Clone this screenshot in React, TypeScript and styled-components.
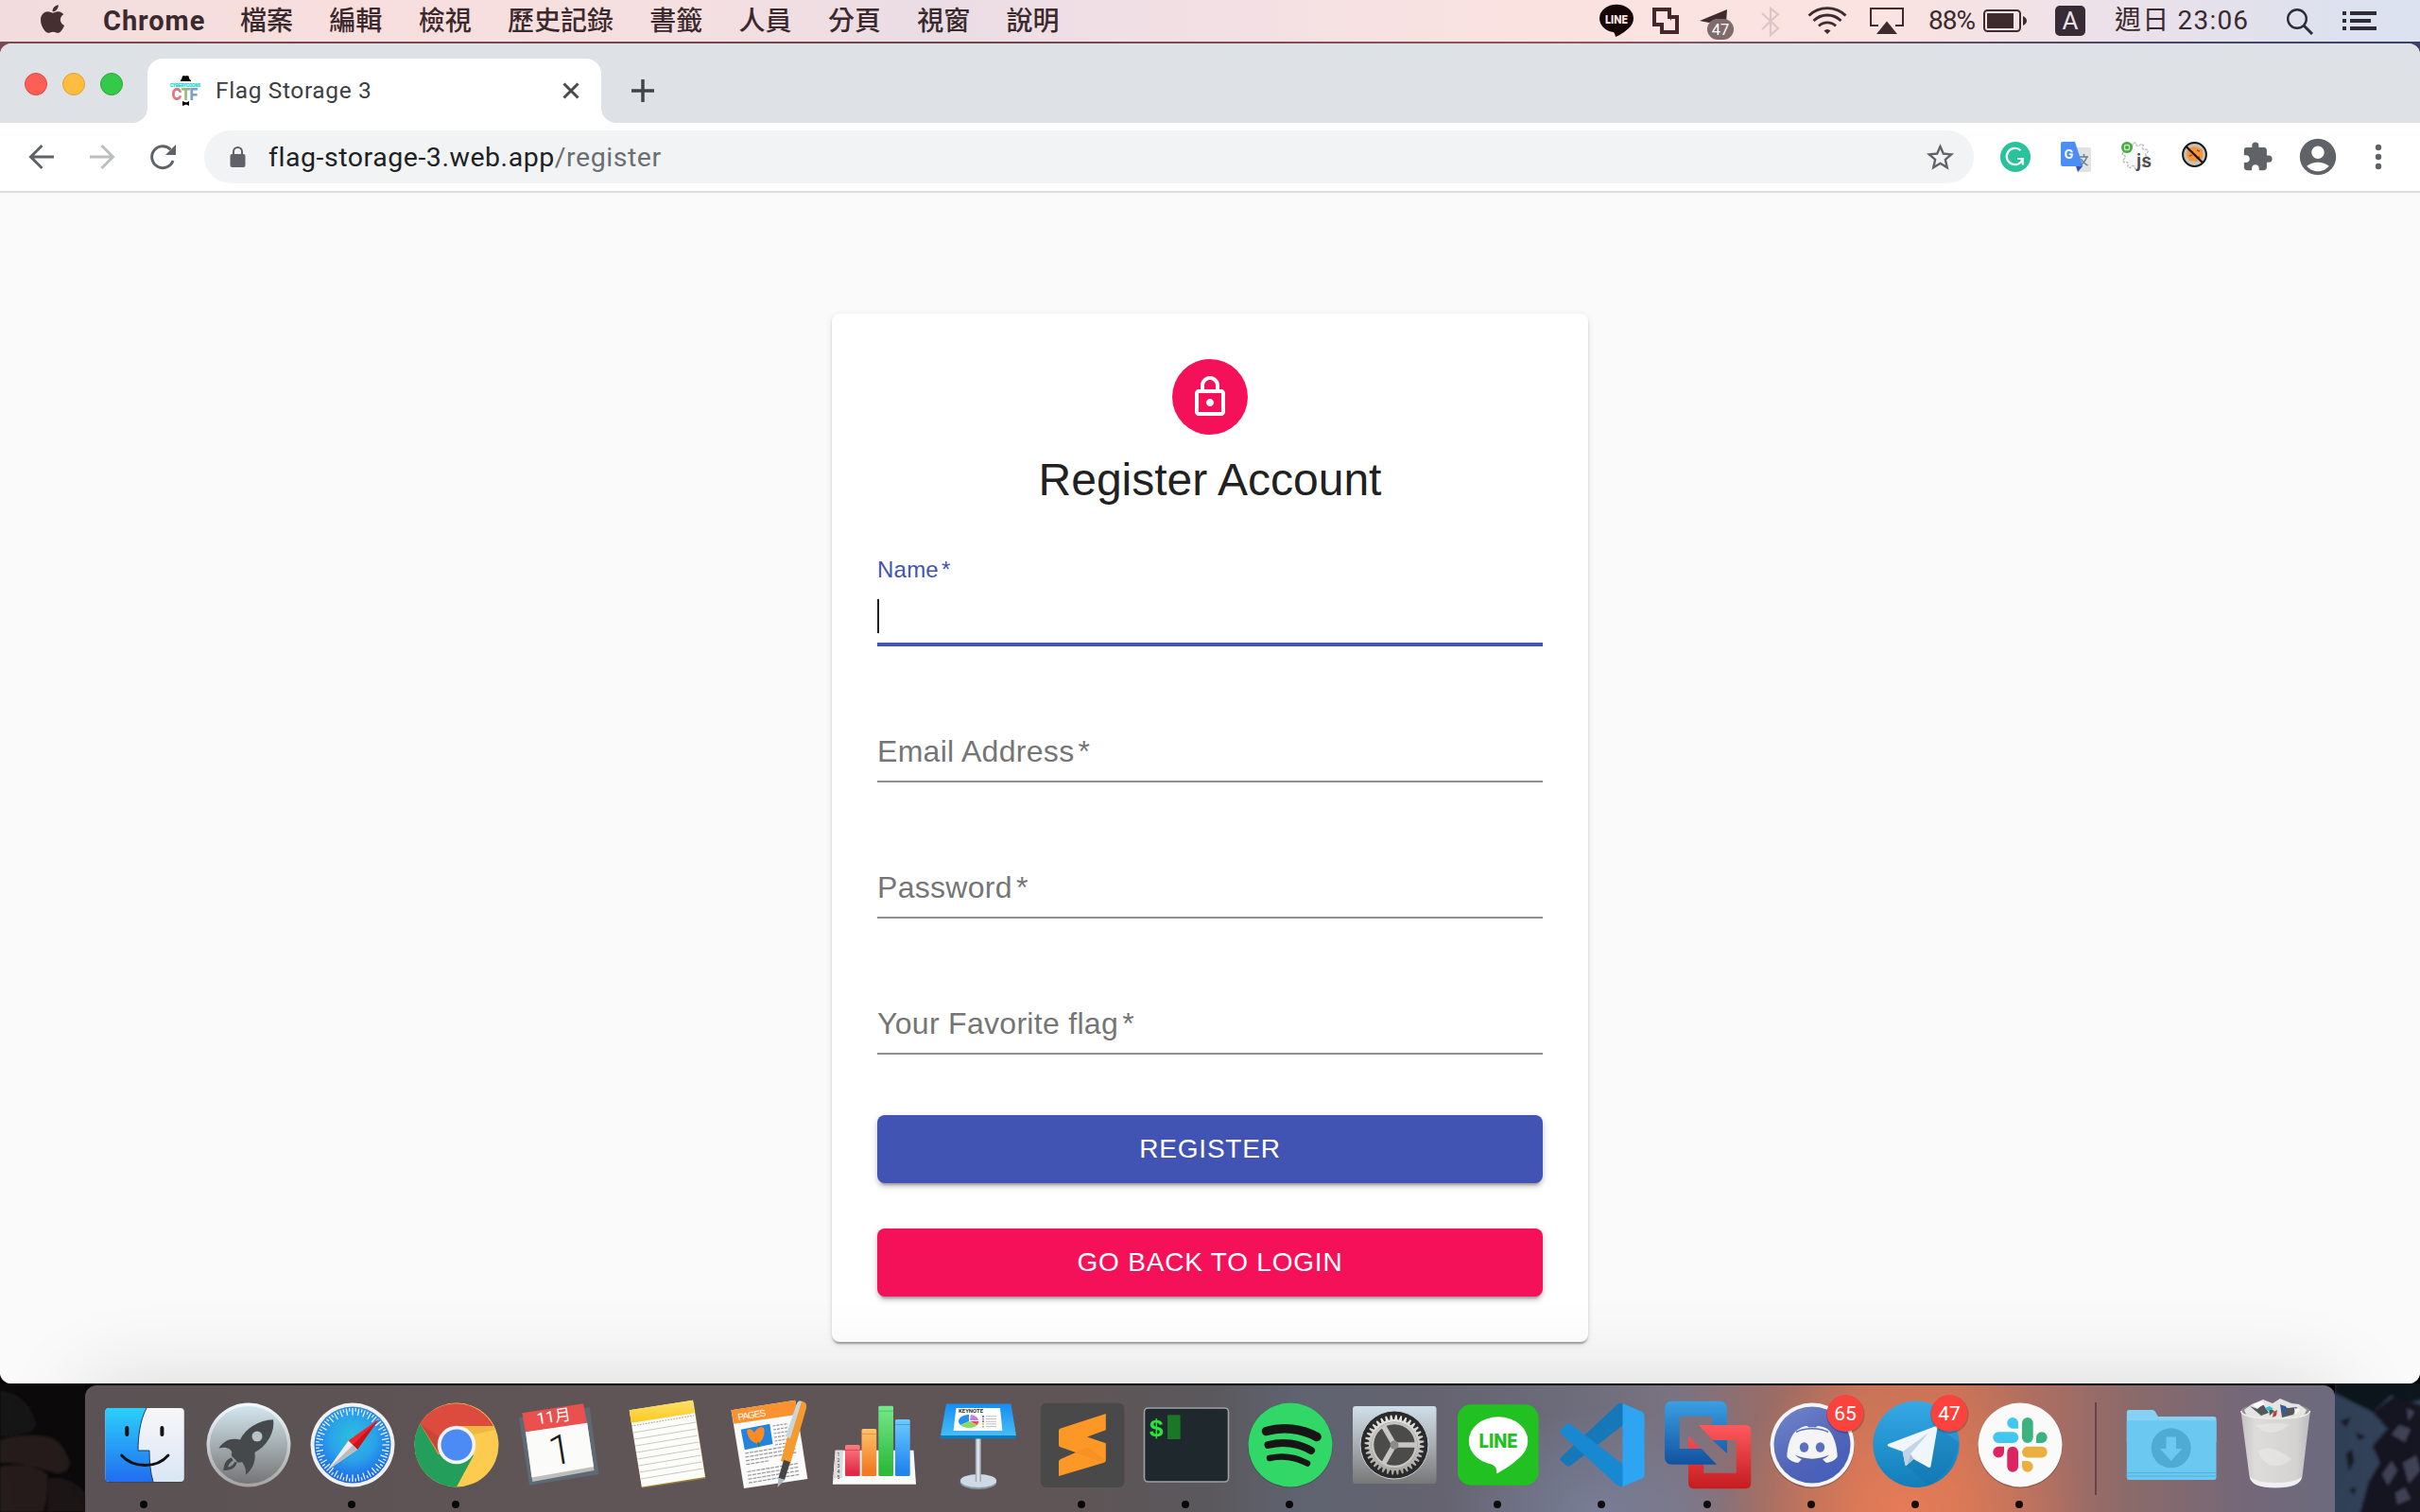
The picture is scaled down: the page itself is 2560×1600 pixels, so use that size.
import React from 'react';
import styled, { createGlobalStyle } from 'styled-components';
import { FaApple } from 'react-icons/fa';
import { MdOutlineLock, MdAccountCircle, MdExtension, MdStarBorder } from 'react-icons/md';

const ui = `Roboto, "Noto Sans CJK TC", sans-serif`;
const page = `"Liberation Sans", Arial, sans-serif`;

const Global = createGlobalStyle`
  * { box-sizing: border-box; }
  html, body { margin: 0; padding: 0; background: #0b0909; }
  body { overflow: hidden; }
  svg { display: block; flex: none; overflow: visible; }
`;

const Desktop = styled.div`
  width: 2560px;
  height: 1600px;
  display: flex;
  flex-direction: column;
  overflow: hidden;
  background: linear-gradient(90deg, #7a4c50 0, #6d474b 40%, #8a5a5c 65%, #454668 90%, #3b4165 100%) 0 0 / 100% 80px no-repeat, #060506;
  font-family: ${ui};
`;

/* ---------- menu bar ---------- */

const MenuBar = styled.header`
  height: 44px;
  display: flex;
  align-items: center;
  justify-content: space-between;
  padding: 0 46px 0 40px;
  color: #3b2a2d;
  background: linear-gradient(90deg, #f2dcdd 0, #f8dfde 14%, #f6dfe0 27%, #ebdde5 38%, #f0dfe5 46%, #fae2e1 62%, #fae3e1 78%, #ece1e9 87%, #dde1ee 96%, #dde2f0 100%);
`;

const MenuLeft = styled.nav`
  display: flex;
  align-items: center;
  height: 44px;
`;

const AppleMark = styled(FaApple)`
  width: 31px;
  height: 34px;
  margin-top: -5px;
  color: #452f31;
`;

const AppName = styled.span`
  margin-left: 38px;
  width: 145px;
  font-size: 29px;
  font-weight: 700;
  letter-spacing: 0.95px;
  white-space: nowrap;
`;

const MenuItem = styled.span`
  font-size: 28px;
  font-weight: 500;
  line-height: 44px;
  margin-right: 38.3px;
  margin-top: 1px;
  white-space: nowrap;
`;

const MenuRight = styled.div`
  display: flex;
  align-items: center;
  height: 44px;
`;

const Status = styled.div<{ $w: number }>`
  width: ${(p) => p.$w}px;
  height: 44px;
  flex: none;
`;

const StatusText = styled.span<{ $w: number; $ls?: number }>`
  width: ${(p) => p.$w}px;
  flex: none;
  font-size: 28px;
  line-height: 44px;
  letter-spacing: ${(p) => p.$ls ?? 0}px;
  white-space: nowrap;
`;

const InputSource = styled.div`
  width: 32px;
  height: 32px;
  margin-right: 31px;
  border-radius: 5px;
  background: #372b35;
  color: #ece2ea;
  font-size: 26px;
  line-height: 33px;
  text-align: center;
`;

/* ---------- browser window ---------- */

const Window = styled.main`
  margin-top: 2px;
  height: 1418px;
  flex: none;
  display: flex;
  flex-direction: column;
  border-radius: 12px;
  overflow: hidden;
  background: #fafafa;
`;

const TabStrip = styled.div`
  height: 84px;
  flex: none;
  display: flex;
  align-items: flex-end;
  background: #dee1e6;
`;

const Lights = styled.div`
  display: flex;
  gap: 16px;
  padding: 0 26px 29px;
  width: 156px;
`;

const Light = styled.span<{ $c: string; $b: string }>`
  width: 24px;
  height: 24px;
  flex: none;
  border-radius: 50%;
  background: ${(p) => p.$c};
  border: 1px solid ${(p) => p.$b};
`;

const Tab = styled.div`
  position: relative;
  width: 480px;
  height: 68px;
  padding: 0 20px 0 24px;
  display: flex;
  align-items: center;
  background: #fff;
  border-radius: 16px 16px 0 0;
  &::before,
  &::after {
    content: '';
    position: absolute;
    bottom: 0;
    width: 16px;
    height: 16px;
  }
  &::before {
    left: -16px;
    background: radial-gradient(circle at 0 0, #dee1e6 15.5px, #fff 16.5px);
  }
  &::after {
    right: -16px;
    background: radial-gradient(circle at 100% 0, #dee1e6 15.5px, #fff 16.5px);
  }
`;

const TabTitle = styled.span`
  flex: 1;
  margin-left: 16px;
  font-size: 24.5px;
  line-height: 32px;
  letter-spacing: 0.62px;
  color: #3c4043;
`;

const NewTab = styled.div`
  margin: 0 0 22px 32px;
`;

const Toolbar = styled.div`
  height: 74px;
  flex: none;
  display: flex;
  align-items: center;
  background: #fff;
  border-bottom: 2px solid #dadce0;
`;

const NavButtons = styled.div`
  display: flex;
  width: 216px;
  padding-left: 24px;
  gap: 24px;
`;

const Omnibox = styled.div`
  width: 1872px;
  height: 56px;
  border-radius: 28px;
  background: #f1f3f4;
  display: flex;
  align-items: center;
  padding: 0 18px 0 27px;
`;

const Url = styled.span`
  flex: 1;
  margin-left: 24px;
  padding-top: 1px;
  font-size: 28.5px;
  line-height: 55px;
  letter-spacing: 0.54px;
  color: #202124;
`;

const UrlPath = styled.span`
  color: #6b6e72;
`;

const Extensions = styled.div`
  display: flex;
  align-items: center;
  padding-left: 28px;
  color: #5f6368;
`;

const Slot = styled.div<{ $w: number }>`
  width: ${(p) => p.$w}px;
  height: 38px;
  display: flex;
  align-items: center;
`;

/* ---------- page ---------- */

const Page = styled.div`
  flex: 1;
  padding-top: 128px;
  display: flex;
  justify-content: center;
  align-items: flex-start;
  font-family: ${page};
  background: #fafafa;
`;

const Card = styled.form`
  width: 800px;
  height: 1088px;
  padding: 48px;
  display: flex;
  flex-direction: column;
  align-items: center;
  background: #fff;
  border-radius: 8px;
  box-shadow: 0 4px 2px -2px rgba(0, 0, 0, 0.2), 0 2px 2px 0 rgba(0, 0, 0, 0.14), 0 2px 6px 0 rgba(0, 0, 0, 0.12);
`;

const Avatar = styled.div`
  width: 80px;
  height: 80px;
  flex: none;
  border-radius: 50%;
  display: flex;
  align-items: center;
  justify-content: center;
  background: #f4115a;
  color: #fff;
`;

const Title = styled.h1`
  margin: 16px 0 48px;
  font-size: 48px;
  font-weight: 400;
  line-height: 64px;
  color: #212121;
`;

const Field = styled.div<{ $focused?: boolean }>`
  width: 704px;
  height: 96px;
  flex: none;
  margin-bottom: 48px;
  padding-top: ${(p) => (p.$focused ? 3 : 47)}px;
  border-bottom: ${(p) => (p.$focused ? '4px solid #4154b3' : '2px solid #8f8f8f')};
`;

const Label = styled.label<{ $focused?: boolean }>`
  display: block;
  font-size: ${(p) => (p.$focused ? 24 : 32)}px;
  line-height: 1;
  letter-spacing: 0.00938em;
  color: ${(p) => (p.$focused ? '#4154b3' : '#757575')};
`;

const Asterisk = styled.span`
  margin-left: -0.08em;
`;

const Caret = styled.span`
  display: block;
  width: 2px;
  height: 36px;
  margin-top: 19px;
  background: #212121;
`;

const Button = styled.button<{ $bg: string }>`
  width: 704px;
  height: 72px;
  flex: none;
  margin: 0 0 48px;
  padding: 0;
  border: 0;
  border-radius: 8px;
  background: ${(p) => p.$bg};
  color: #fff;
  font-family: ${page};
  font-size: 28px;
  letter-spacing: 0.02857em;
  box-shadow: 0 6px 2px -4px rgba(0, 0, 0, 0.2), 0 4px 4px 0 rgba(0, 0, 0, 0.14), 0 2px 10px 0 rgba(0, 0, 0, 0.12);
`;

const ButtonGroup = styled.div`
  padding-top: 16px;
`;

/* ---------- dock ---------- */

const Bottom = styled.footer`
  position: relative;
  height: 136px;
  flex: none;
  display: flex;
  padding-top: 2px;
`;

const Rocks = styled.svg`
  margin-top: -2px;
`;

const Dock = styled.div`
  position: relative;
  width: 2380px;
  height: 134px;
  padding-left: 7px;
  display: flex;
  border-radius: 12px 12px 0 0;
  background: radial-gradient(ellipse 190px 170px at 1925px 134px, rgba(238, 126, 86, 0.8), rgba(240, 126, 84, 0) 100%),
    radial-gradient(ellipse 160px 110px at 1600px 134px, rgba(125, 135, 165, 0.6), rgba(125, 135, 165, 0) 100%),
    linear-gradient(90deg, #5a5254 0, #5f5456 20%, #5f5557 44%, #5a585c 50%, #5f6370 54%, #64636f 60%, #6c6c7b 66%, #7b7381 71%, #9a6c66 75%, #c07158 79%, #c57257 83%, #ab6e62 87%, #8a6a6b 91%, #746878 96%, #6c6a7e 100%);
  box-shadow: 0 0 90px rgba(0, 0, 0, 0.15);
`;

const Separator = styled.div`
  width: 2px;
  height: 98px;
  margin: 18px 24px 0 29px;
  background: rgba(70, 35, 40, 0.55);
`;

const AppIcon = ({ dot, children }: { dot?: number; children: React.ReactNode }) => (
  <svg width="110" height="134" viewBox="0 0 110 134">
    {children}
    {dot && <circle cx={dot} cy="126" r="4" fill="#000" fillOpacity="0.9" />}
  </svg>
);

const Badge = ({ n }: { n: number }) => (
  <g>
    <circle cx="95.3" cy="30.7" r="20.2" fill="#000" opacity="0.2" />
    <circle cx="95" cy="29.7" r="19.4" fill="#fb423d" />
    <text x="95" y="37" fontFamily="Roboto" fontSize="21" textAnchor="middle" fill="#fff">{n}</text>
  </g>
);

const polar = (cx: number, cy: number, r: number, deg: number) => {
  const a = (deg * Math.PI) / 180;
  return [cx + r * Math.cos(a), cy + r * Math.sin(a)];
};

const gearPath = (cx: number, cy: number, inner: number, outer: number, teeth: number) => {
  const step = 360 / teeth;
  let d = '';
  for (let i = 0; i < teeth; i++) {
    [[inner, 0], [outer, 0.2], [outer, 0.5], [inner, 0.7]].forEach(([r, f]) => {
      const [x, y] = polar(cx, cy, r, (i + f) * step);
      d += `${d ? 'L' : 'M'}${x.toFixed(2)} ${y.toFixed(2)}`;
    });
  }
  return d + 'Z';
};

const Finder = () => (
  <AppIcon dot={55}>
    <defs>
      <linearGradient id="fb" x1="0" y1="0" x2="0" y2="1"><stop stopColor="#2bd0fb" /><stop offset="1" stopColor="#216df0" /></linearGradient>
      <linearGradient id="fw" x1="0" y1="0" x2="0" y2="1"><stop stopColor="#f7f6f8" /><stop offset="1" stopColor="#dae6f5" /></linearGradient>
    </defs>
    <rect x="14.4" y="25" width="83.4" height="78" rx="4" fill="#333" opacity="0.4" />
    <rect x="14.4" y="24" width="83.4" height="78" rx="4" fill="url(#fw)" />
    <path d="M18.4 24H58C51 37 49 55 49 69H61C61 80 62 92 65 102H18.4a4 4 0 0 1-4-4V28a4 4 0 0 1 4-4Z" fill="url(#fb)" />
    <path d="M58 24C51 37 49 55 49 69H61C61 80 62 92 65 102" fill="none" stroke="#1b3c66" strokeWidth="1" />
    <path d="M37.3 45v7M74.4 45v7" stroke="#111" strokeWidth="4" strokeLinecap="round" />
    <path d="M31.6 74C44 88 69 88 81 74" fill="none" stroke="#111" strokeWidth="2.8" strokeLinecap="round" />
  </AppIcon>
);

const Launchpad = () => (
  <AppIcon>
    <defs>
      <linearGradient id="lp" x1="0" y1="0" x2="0" y2="1"><stop stopColor="#d3e6ee" /><stop offset="1" stopColor="#757575" /></linearGradient>
      <linearGradient id="lr" x1="0" y1="0" x2="0" y2="1"><stop stopColor="#f1fbff" /><stop offset="1" stopColor="#a3a3a3" /></linearGradient>
    </defs>
    <circle cx="56" cy="63" r="44.5" fill="url(#lr)" />
    <circle cx="56" cy="63" r="41" fill="url(#lp)" />
    <path d="M82 36.3C84 48 77 63 62.4 71C64 80 60 89 53 94.7C53.5 89 52 85 49 81C46 82 44 82 43 80C42 77 37 76 38 73C39 70 37 68 35 67C31 65 28 65.5 24.4 66.7C29 59 37 55 47 57.5C53 45 67 37 82 36.3Z" fill="#45494b" />
    <circle cx="65" cy="54" r="5.5" fill="#b9c3c7" />
    <path d="M38 76.5C31 79 30 84 29.3 90C36 90 43 88 43.5 81L41 81.5C39 85 37 86 34 86.5C35 83 37 81 39.5 79.5Z" fill="#45494b" />
  </AppIcon>
);

const Safari = () => (
  <AppIcon dot={55}>
    <defs><radialGradient id="sf" cx="0.5" cy="0.4" r="0.6"><stop stopColor="#2cc0dc" /><stop offset="0.5" stopColor="#2aa2ea" /><stop offset="1" stopColor="#1c62e4" /></radialGradient></defs>
    <circle cx="56" cy="63" r="44.5" fill="#f2f1f2" />
    <circle cx="56" cy="63" r="40.5" fill="url(#sf)" />
    {Array.from({ length: 72 }, (_, i) => {
      const [x1, y1] = polar(56, 63, 39, i * 5);
      const [x2, y2] = polar(56, 63, i % 2 ? 35.5 : 31.5, i * 5);
      return <line key={i} x1={x1} y1={y1} x2={x2} y2={y2} stroke="#eaf6ff" strokeWidth="1.3" />;
    })}
    <path d="M84 35.5L51.5 58.5L61 68Z" fill="#f0242b" />
    <path d="M84 35.5L56.2 63.3L61 68Z" fill="#c8141d" />
    <path d="M29 90L51.5 58.5L61 68Z" fill="#ededed" />
    <path d="M29 90L56.2 63.3L61 68Z" fill="#b9bcc0" />
  </AppIcon>
);

const ChromeIcon = () => (
  <AppIcon dot={55}>
    <circle cx="56" cy="63" r="44.5" fill="#fdcb4d" />
    <path d="M56 63L36.7 73.3L17.5 40.7A44.5 44.5 0 0 0 56 107.5L74 74Z" fill="#249f5b" />
    <path d="M17.5 40.7A44.5 44.5 0 0 1 95 43H56L37.5 72Z" fill="#dc4b3e" />
    <path d="M56 43H95L96.5 47L74 52Z" fill="#e0a63a" opacity="0.5" />
    <path d="M17.5 40.7L37 74L43 58Z" fill="#a8382f" opacity="0.35" />
    <circle cx="56" cy="63" r="20.2" fill="#f3f3f3" />
    <circle cx="56" cy="63" r="16.5" fill="#4c8bf5" />
  </AppIcon>
);

const CalendarIcon = () => (
  <AppIcon>
    <path d="M12 34L86.7 23L96.5 94L23 105.7Z" fill="#5d6973" />
    <path d="M19 49L84 39L91.6 90L26.3 102Z" fill="#bdbdb9" />
    <path d="M19 49L84 39L91 86L25.5 97.5Z" fill="#fbfbfa" />
    <path d="M15.2 29.3L80 19.3L84 39.7L19 49.3Z" fill="#e9504e" />
    <g transform="rotate(-9 50 60)">
      <text x="53" y="39" fontFamily="Roboto, 'Noto Sans CJK TC'" fontSize="17" fill="#fff" textAnchor="middle">11月</text>
      <text x="54" y="84" fontFamily="Roboto" fontWeight="300" fontSize="44" fill="#1c1c1c" textAnchor="middle">1</text>
    </g>
  </AppIcon>
);

const Notes = () => (
  <AppIcon>
    <defs><linearGradient id="ny" x1="0" y1="0" x2="0" y2="1"><stop stopColor="#ffe06a" /><stop offset="1" stopColor="#fac91f" /></linearGradient></defs>
    <path d="M20 30L87 18L99.5 98.5L32 108.7Z" fill="#9a8332" />
    <path d="M18.7 26.3L86 15.7L99 97L31.8 107.5Z" fill="#fcfcf9" />
    {[0, 1, 2, 3, 4, 5, 6, 7].map((i) => (
      <path key={i} d={`M${23 + i * 1.1} ${50 + i * 7}l66 -11`} stroke="#c8c8c4" strokeWidth="1" />
    ))}
    <path d="M21 43l66-11" stroke="#999" strokeDasharray="1.5 1.5" />
    <path d="M18.7 26.3L86 15.7L87.7 29.3L20.8 39.7Z" fill="url(#ny)" />
  </AppIcon>
);

const Pages = () => (
  <AppIcon>
    <path d="M16.5 26.3L84.2 15.7L97.3 99L30 109Z" fill="#fbfbfb" />
    <path d="M16.5 26.3L84.2 15.7L87 30.7L19.3 40.7Z" fill="#fb9230" />
    <text transform="rotate(-9 24 37)" x="24" y="37" fontFamily="Liberation Sans" fontSize="10" fill="#fff" textLength="30">PAGES</text>
    <path d="M26.7 46.7L57.3 40.7L60.5 62L30.8 68.3Z" fill="#2483dd" />
    <path d="M33 48C36 45 38 46 41 50C43 46 47 43 51 45C53 51 50 59 45 61.5C38 61 34 55 33 48Z" fill="#fb8b22" />
    <path d="M45 60l1 5" stroke="#3d7b2f" strokeWidth="1.5" />
    {[0, 1, 2, 3, 4, 5].map((i) => <path key={i} d={`M${60.5 + i * 0.5} ${43 + i * 4}l16-2.6`} stroke="#999" strokeWidth="1.2" strokeDasharray="3 1" />)}
    {[0, 1, 2, 3, 5, 6, 7, 8].map((i) => <path key={i} d={`M${31 + i * 0.5} ${72 + i * 3.9}l${i === 3 ? 24 : 54}-${i === 3 ? 4 : 9}`} stroke="#999" strokeWidth="1.2" strokeDasharray="4 1" />)}
    <path d="M85 22Q87 15 92 17Q97 18 96 24L79 83L69 80Z" fill="#f59a2c" />
    <path d="M85 22Q87 15 91 17L79 56L74 54Z" fill="#c8d6e2" />
    <path d="M72 79L79 81L73 100L66.5 98Z" fill="#454545" />
    <path d="M66.5 98L73 100L65.5 108Z" fill="#a8b8c4" />
  </AppIcon>
);

const bars = [
  { x: 27, y: 63, c: '#e02a48', t: '#fb7d80' },
  { x: 44.5, y: 46, c: '#f27a24', t: '#ffc368' },
  { x: 62.3, y: 21.7, c: '#2eba3c', t: '#76e88c' },
  { x: 80, y: 36, c: '#2384f0', t: '#6cccff' },
];

const Numbers = () => (
  <AppIcon>
    <defs>
      {bars.map((b, i) => (
        <linearGradient key={b.c} id={`nb${i}`} x1="0" y1="0" x2="0" y2="1"><stop stopColor={b.t} /><stop offset="0.9" stopColor={b.c} /></linearGradient>
      ))}
    </defs>
    <path d="M16.7 68.7H99.5L102 104.7H13.8Z" fill="#fafafa" />
    <path d="M16.7 68.7H25L24 98H14.5Z" fill="#ddd" />
    {[1, 2, 3, 4, 5].map((n) => <text key={n} x="18.5" y={69 + n * 6} fontFamily="Roboto" fontSize="5" fill="#333">{n}</text>)}
    {bars.map((b, i) => (
      <g key={b.x}>
        <rect x={b.x} y={b.y} width="15.7" height={96 - b.y} rx="1.5" fill={`url(#nb${i})`} />
        <rect x={b.x} y={b.y + 5} width="15.7" height="1" fill={b.c} opacity="0.6" />
      </g>
    ))}
  </AppIcon>
);

const Keynote = () => (
  <AppIcon>
    <defs>
      <linearGradient id="kn" x1="0" y1="0" x2="0" y2="1"><stop stopColor="#168df5" /><stop offset="1" stopColor="#45bdf5" /></linearGradient>
      <linearGradient id="ks" x1="0" y1="0" x2="1" y2="0"><stop stopColor="#8f9aa5" /><stop offset="0.5" stopColor="#edf1f4" /><stop offset="1" stopColor="#8f9aa5" /></linearGradient>
    </defs>
    <ellipse cx="58" cy="102.5" rx="19.2" ry="7.5" fill="#8a98a6" />
    <ellipse cx="58" cy="101" rx="19.2" ry="7" fill="#cdd9e4" />
    <rect x="54.8" y="55" width="6" height="47" fill="url(#ks)" />
    <path d="M24 19.5H92.4L98 53H18Z" fill="url(#kn)" />
    <path d="M18 53H98V56.5H18Z" fill="#0f78b6" />
    <path d="M34.4 24H81L83.4 48H31.6Z" fill="#fff" />
    <text x="37" y="29.3" fontFamily="Roboto" fontWeight="700" fontSize="4.5" fill="#333" textLength="26" lengthAdjust="spacingAndGlyphs">KEYNOTE</text>
    <path d="M48 38L48 31A11 7 0 0 0 39 42Z" fill="#2391f0" />
    <path d="M48 38L39 42A11 7 0 0 0 57 42Z" fill="#86dd5f" />
    <path d="M49 37L50 31A11 7 0 0 1 58 37Z" fill="#c77be8" />
    <path d="M49 38H58.5L57 42Z" fill="#f3474d" />
    {['#2391f0', '#c77be8', '#f3474d', '#f7c93b', '#86dd5f'].map((c, i) => (
      <g key={c}><rect x="62" y={32 + i * 2.7} width="2" height="1.8" fill={c} /><rect x="66" y={32.3 + i * 2.7} width="11" height="1" fill="#bbb" /></g>
    ))}
  </AppIcon>
);

const Sublime = () => (
  <AppIcon dot={57}>
    <rect x="13.8" y="18.7" width="88.6" height="89.3" rx="6" fill="#494949" />
    <path d="M82.8 30V47.3L63 54.5L82.8 61.3V79.5Q82.8 81 81 81.7L33 96V80.5Q33 79 35 78L51 71L34 65Q33 64.5 33 63V48Q33 46 35 45.5Z" fill="#fd9827" />
    <path d="M51 71L64 65.5L82.8 79.5L80 81.5Z" fill="#ec871c" opacity="0.4" />
  </AppIcon>
);

const Terminal = () => (
  <AppIcon dot={57}>
    <rect x="13.5" y="24" width="89" height="78" rx="4" fill="#1f282d" stroke="#9aa3a6" strokeWidth="1.6" />
    <text x="18.5" y="54" fontFamily="Liberation Mono" fontWeight="700" fontSize="26" fill="#2be53e">$</text>
    <rect x="38" y="31.3" width="13.6" height="25.7" fill="#1b7723" />
  </AppIcon>
);

const Spotify = () => (
  <AppIcon dot={57}>
    <circle cx="58" cy="63.5" r="45" fill="#2a3330" opacity="0.4" />
    <circle cx="58" cy="63" r="44.5" fill="#31d867" />
    <g fill="none" stroke="#161616" strokeLinecap="round">
      <path d="M32.5 48.5C50 43.5 70 45.5 86 54.5" strokeWidth="9.5" />
      <path d="M34.5 63C50 59 67 61 80 69" strokeWidth="8" />
      <path d="M36 77C49 74 63 75.5 76 82.5" strokeWidth="6.5" />
    </g>
  </AppIcon>
);

const Settings = () => (
  <AppIcon>
    <defs>
      <linearGradient id="st" x1="0" y1="0" x2="0" y2="1"><stop stopColor="#cfdfe9" /><stop offset="0.5" stopColor="#a9aeb1" /><stop offset="1" stopColor="#777" /></linearGradient>
      <linearGradient id="sg" x1="0" y1="0" x2="0" y2="1"><stop stopColor="#e6e6e4" /><stop offset="1" stopColor="#a5a49f" /></linearGradient>
    </defs>
    <rect x="14" y="22" width="88.5" height="82" rx="3" fill="url(#st)" />
    <circle cx="58" cy="63" r="36" fill="#2a2a2a" stroke="#c5d2de" strokeWidth="1" />
    <path d={gearPath(58, 63, 27, 31.5, 36)} fill="url(#sg)" />
    <circle cx="58" cy="63" r="24.5" fill="#8a8a87" />
    <circle cx="58" cy="63" r="22" fill="#4b4b4a" />
    <path d="M58 63L80.5 63M58 63L46.8 43.5M58 63L46.8 82.5" stroke="#c7c6c2" strokeWidth="5.5" />
    <circle cx="58" cy="63" r="23" fill="none" stroke="#c7c6c2" strokeWidth="2.5" />
    <circle cx="58" cy="63" r="4.5" fill="#8b8b88" />
  </AppIcon>
);

const LineApp = () => (
  <AppIcon dot={57}>
    <rect x="15" y="20.3" width="85.5" height="85.4" rx="14" fill="#20c120" />
    <ellipse cx="58" cy="58.7" rx="31.2" ry="25.5" fill="#fff" />
    <path d="M42 79.5C52 84 57 85 56 92Q56 94 58 92.5C68 87 78 80 84 72Z" fill="#fff" />
    <text x="58" y="66" fontFamily="Inter" fontWeight="800" fontSize="19.5" textAnchor="middle" fill="#20c120" textLength="41" lengthAdjust="spacingAndGlyphs">LINE</text>
  </AppIcon>
);

const VSCode = () => (
  <AppIcon dot={57}>
    <path d="M14.3 76L73 21Q76 18 80 19V42L25 84.5Q22 87 19 84L14.3 80Q12.5 78 14.3 76Z" fill="#1678b8" />
    <path d="M14.3 51Q12.5 49 14.3 47L19 42Q22 39 25 41.5L80 83.5V107Q76 107.5 73 105Z" fill="#1889d1" />
    <path d="M79.5 19L100 28Q102.6 29.5 102.6 32V94.5Q102.6 97 100 98.5L79.5 107.3Z" fill="#2da5f2" />
  </AppIcon>
);

const VMware = () => (
  <AppIcon dot={59}>
    <defs>
      <linearGradient id="vb" x1="0" y1="0" x2="0" y2="1"><stop stopColor="#3a9fe4" /><stop offset="1" stopColor="#12529f" /></linearGradient>
      <linearGradient id="vr" gradientUnits="userSpaceOnUse" x1="0" y1="42" x2="0" y2="109"><stop stopColor="#fd5a5e" /><stop offset="1" stopColor="#c51c20" /></linearGradient>
    </defs>
    <path d="M50.3 42H99Q105.3 42 105.3 48V103Q105.3 109.3 99 109.3H45Q39 109.3 39 103V53.3L55.3 70V92.7H89.7V58H65Z" fill="url(#vr)" />
    <path d="M22 16.7H72Q80 16.7 80 25V72L64.3 58V32.7H29.7V67H53L69 83.7H22Q14 83.7 14 76V25Q14 16.7 22 16.7Z" fill="url(#vb)" />
    <path d="M50.3 42H90V58H65Z" fill="url(#vr)" />
  </AppIcon>
);

const Discord = () => (
  <AppIcon dot={59}>
    <defs><linearGradient id="dc" x1="0" y1="0" x2="0.6" y2="1"><stop stopColor="#7487cb" /><stop offset="0.7" stopColor="#4f63b8" /><stop offset="1" stopColor="#4760ba" /></linearGradient></defs>
    <circle cx="60" cy="64" r="45" fill="#333" opacity="0.3" />
    <circle cx="60" cy="63" r="44.5" fill="#f5f5f6" />
    <circle cx="60" cy="63" r="40.5" fill="url(#dc)" />
    <path d="M47 45.5C50 43.5 53 43 55 43L56 44.5Q60 44 64 44.5L65.5 43C69 43 72 44 75 45.5C82 49 86.5 64 86.7 75.5C84 79.5 79 81.8 74.5 81.8L71 78C74 77 76 76 78 73.5C67 79 53 79 42 73.5C44 76 46 77 49 78L45.5 81.8C41 81.8 36 79.5 33.3 75.5C33.5 64 38 49 47 45.5Z" fill="#f4f4f5" />
    <ellipse cx="51.5" cy="65.5" rx="4.7" ry="5.2" fill="#5b6fbf" />
    <ellipse cx="68.5" cy="65.5" rx="4.7" ry="5.2" fill="#5b6fbf" />
    <path d="M43 49.5C48 46.5 53 45.7 60 45.7S72 46.5 77 49.5" fill="none" stroke="#5b6fbf" strokeWidth="1.5" />
    <Badge n={65} />
  </AppIcon>
);

const Telegram = () => (
  <AppIcon dot={59}>
    <defs><linearGradient id="tg" x1="0" y1="0" x2="0" y2="1"><stop stopColor="#35a9e6" /><stop offset="1" stopColor="#127eb9" /></linearGradient></defs>
    <circle cx="60" cy="62.3" r="45.7" fill="url(#tg)" />
    <path d="M82.3 44L105 60Q102 90 72 106L50 85Z" fill="#0f6ca5" opacity="0.3" />
    <path d="M30.5 62L80.5 43.2Q83 42.5 82.5 45L75.5 85.5Q74.8 88 72.5 86.5L57.3 78L50 84.5Q48.5 85.5 48.3 83.5L45.7 70L31 64.7Q28.5 63.5 30.5 62Z" fill="#f0f6fb" />
    <path d="M45.7 70L73.5 50L54 72.5L50 84.5Q48.5 85.5 48.3 83.5Z" fill="#c0d5e5" />
    <path d="M54 72.5L57.5 78L50 84.5Z" fill="#a5c2d8" />
    <Badge n={47} />
  </AppIcon>
);

const Slack = () => (
  <AppIcon dot={59}>
    <circle cx="60" cy="64" r="45" fill="#333" opacity="0.3" />
    <circle cx="60" cy="63" r="44.5" fill="#fafafa" />
    <rect x="31.3" y="49.3" width="27" height="11.7" rx="5.85" fill="#41c6ef" />
    <path d="M58 45.7H52.2A5.85 5.85 0 1 1 58 39.85Z" fill="#41c6ef" />
    <rect x="62" y="34" width="11.7" height="27" rx="5.85" fill="#3ab37e" />
    <path d="M77 61V55.15A5.85 5.85 0 1 1 82.85 61Z" fill="#3ab37e" />
    <rect x="62" y="64.7" width="26.7" height="11.7" rx="5.85" fill="#e9b03f" />
    <path d="M62 80H67.85A5.85 5.85 0 1 1 62 85.85Z" fill="#e9b03f" />
    <rect x="46.3" y="64.7" width="11.7" height="27" rx="5.85" fill="#de2460" />
    <path d="M43 64.7V70.55A5.85 5.85 0 1 1 37.15 64.7Z" fill="#de2460" />
  </AppIcon>
);

const Downloads = () => (
  <AppIcon>
    <path d="M10 26H35Q37 26 38 28L41 33H100Q102.5 33 102.5 35.5V60H7.8V28Q7.8 26 10 26Z" fill="#85d2f5" />
    <path d="M10 37.3H100.5Q102.5 37.3 102.5 39.5V97.5Q102.5 100 100 100H10Q7.8 100 7.8 97.5V39.5Q7.8 37.3 10 37.3Z" fill="#6bc8f1" />
    <path d="M7.8 92.5H102.5M7.8 96H102.5" stroke="#56aed8" strokeWidth="1" />
    <circle cx="54.7" cy="66.3" r="21" fill="#4faad4" />
    <path d="M49.5 54.5H60V67H66.5L54.7 80L43 67H49.5Z" fill="#6bc8f1" />
  </AppIcon>
);

const Trash = () => (
  <AppIcon>
    <defs><linearGradient id="tr" x1="0" y1="0" x2="1" y2="0"><stop stopColor="#c4c3c4" /><stop offset="0.2" stopColor="#dddcda" /><stop offset="0.8" stopColor="#d4d3d2" /><stop offset="1" stopColor="#bdbcbe" /></linearGradient></defs>
    <ellipse cx="55" cy="27" rx="36.5" ry="8" fill="#8e8d90" />
    <path d="M22 26L30 20L42 15L52 19L60 14L72 19L80 20L88 26L84 35H26Z" fill="#e4e4e2" />
    <path d="M28 22l8 3 6-5 6 9-8 3zM60 20l8 4 10-1-4 8-12 3zM48 24l6 3-5 5z" fill="#55575c" />
    <path d="M44 24l5-2 4 3-6 2z" fill="#2cc3d9" />
    <path d="M61 21l5 1 1 6-5 1z" fill="#2d5fa8" />
    <path d="M53 28l4-2-1 6-4 2z" fill="#b04a35" />
    <path d="M31 20l10-3 3 3-9 4zM75 24l6 2-5 5z" fill="#fafafa" />
    <path d="M18.6 28C28 37 82 37 91.7 28L83.5 96Q82 108.5 55 108.5Q29 108.5 27.5 96Z" fill="url(#tr)" />
    <path d="M28 97Q30 108 55 108Q81 108 83 97Q75 103 55 103Q36 103 28 97Z" fill="#f0f0f0" />
    <path d="M34 42Q48 58 70 42Q62 38 34 42ZM36 70Q50 60 72 78Q50 96 36 70Z" fill="#f2f2f0" opacity="0.4" />
    <path d="M18.6 27Q20 35 55 35Q90 35 91.7 27" fill="none" stroke="#ededee" strokeWidth="1.5" />
  </AppIcon>
);

const menus = ['檔案', '編輯', '檢視', '歷史記錄', '書籤', '人員', '分頁', '視窗', '說明'];
const fields = ['Email Address', 'Password', 'Your Favorite flag'];
const dockApps = [Finder, Launchpad, Safari, ChromeIcon, CalendarIcon, Notes, Pages, Numbers, Keynote, Sublime, Terminal, Spotify, Settings, LineApp, VSCode, VMware, Discord, Telegram, Slack];

const StatusIcons = () => (
  <MenuRight>
    <Status $w={56}>
      <svg width="36" height="44">
        <ellipse cx="18" cy="19.5" rx="18" ry="14.7" fill="#150507" />
        <path d="M7 30Q17 33 17 39Q27 35 33 27Z" fill="#150507" />
        <text x="18" y="24.5" fontFamily="Inter" fontWeight="800" fontSize="12" fill="#fae3e2" textAnchor="middle" textLength="24" lengthAdjust="spacingAndGlyphs">LINE</text>
      </svg>
    </Status>
    <Status $w={50}>
      <svg width="28" height="44">
        <path d="M11 26H2V10H18V17" fill="none" stroke="#45292a" strokeWidth="4" />
        <path d="M16 18H26V34H10V25" fill="none" stroke="#45292a" strokeWidth="4" />
        <path d="M8 24L12 24L12 28ZM16 16L20 16L20 22Z" fill="#45292a" />
        <path d="M8.5 16.5L19.5 28" stroke="#fae3e2" strokeWidth="3.6" />
      </svg>
    </Status>
    <Status $w={66}>
      <svg width="36" height="44">
        <path d="M0 22L29 10L28 24L18 20L10 24Z" fill="#3f2c2e" />
        <rect x="8" y="20" width="28" height="22" rx="11" fill="#806b6c" />
        <text x="22" y="37" fontFamily="Roboto" fontSize="16.5" fill="#fff" textAnchor="middle">47</text>
      </svg>
    </Status>
    <Status $w={48}>
      <svg width="18" height="44"><path d="M0 14L17 30L9 37V9L17 15L0 31" fill="none" stroke="#dcc5c6" strokeWidth="2.2" /></svg>
    </Status>
    <Status $w={66}>
      <svg width="42" height="44">
        <g fill="none" stroke="#3d2b2e" strokeWidth="2.8">
          <path d="M1.5 16.5A28 28 0 0 1 40.5 16.5" /><path d="M6.5 22A20.5 20.5 0 0 1 35.5 22" /><path d="M12 27.5A13 13 0 0 1 30 27.5" />
        </g>
        <path d="M21 36L17.5 32.5Q21 29.5 24.5 32.5Z" fill="#3d2b2e" />
      </svg>
    </Status>
    <Status $w={62}>
      <svg width="36" height="44"><path d="M9 27H1V9H35V27H27" fill="none" stroke="#3d2b2e" strokeWidth="2" /><path d="M18 22.5L29 36H7Z" fill="#3d2b2e" /></svg>
    </Status>
    <StatusText $w={58} $ls={-1}>88%</StatusText>
    <Status $w={76}>
      <svg width="46" height="44">
        <rect x="1" y="11" width="38" height="22" rx="3.5" fill="none" stroke="#3d2b2e" strokeWidth="2" />
        <rect x="4" y="14" width="28" height="16" fill="#3d2b2e" /><path d="M42 17Q46 19 46 22T42 27Z" fill="#3d2b2e" />
      </svg>
    </Status>
    <InputSource>A</InputSource>
    <StatusText $w={182} $ls={1.2}>週日 23:06</StatusText>
    <Status $w={59}>
      <svg width="28" height="44"><circle cx="11" cy="20" r="9.8" fill="none" stroke="#2e2b38" strokeWidth="2.4" /><path d="M18 27L27 36" stroke="#2e2b38" strokeWidth="3" /></svg>
    </Status>
    <Status $w={36}>
      <svg width="36" height="44"><path d="M0 14h4M8 14h28M0 22h4M8 22h22M0 30h4M8 30h28" stroke="#2e2b38" strokeWidth="3.8" /></svg>
    </Status>
  </MenuRight>
);

const Favicon = () => (
  <svg width="32" height="32" viewBox="0 0 32 32">
    <path d="M11 6Q10.5 4.5 12 4L13 0.5Q14.5 -0.5 16 0.5Q17.5 -0.5 19.5 0.5L20.5 4Q22.5 4.5 22 6Z" fill="#000" />
    <text x="0" y="12.2" fontFamily="Liberation Sans" fontWeight="700" fontSize="6" fill="#2fd3d0" stroke="#2fd3d0" strokeWidth="0.4" textLength="32" lengthAdjust="spacingAndGlyphs">CYBERYCOONS</text>
    <g fontFamily="Inter" fontWeight="800" fontSize="17.5">
      <text x="1.5" y="25.5" fill="#d97782" textLength="11" lengthAdjust="spacingAndGlyphs">C</text>
      <text x="11.5" y="25.5" fill="#8dbb7e" textLength="10" lengthAdjust="spacingAndGlyphs">T</text>
      <text x="20.5" y="25.5" fill="#7d9fcd" textLength="9" lengthAdjust="spacingAndGlyphs">F</text>
    </g>
    <path d="M13 27L17 28.5L20 27V32L17 30.5L13 32Z" fill="#000" />
  </svg>
);

const App = () => (
  <>
    <Global />
    <Desktop>
      <MenuBar>
        <MenuLeft>
          <AppleMark />
          <AppName>Chrome</AppName>
          {menus.map((m) => <MenuItem key={m}>{m}</MenuItem>)}
        </MenuLeft>
        <StatusIcons />
      </MenuBar>

      <Window>
        <TabStrip>
          <Lights>
            <Light $c="#fd5f57" $b="#e2463f" />
            <Light $c="#febd3f" $b="#e0a032" />
            <Light $c="#33ca4a" $b="#27aa35" />
          </Lights>
          <Tab>
            <Favicon />
            <TabTitle>Flag Storage 3</TabTitle>
            <svg width="24" height="24"><path d="M4.500 4.500L19.500 19.500M19.500 4.500L4.500 19.500" stroke="#46494d" strokeWidth="2.9" /></svg>
          </Tab>
          <NewTab>
            <svg width="24" height="24"><path d="M12 0V24M0 12H24" stroke="#3f4347" strokeWidth="3.4" /></svg>
          </NewTab>
        </TabStrip>

        <Toolbar>
          <NavButtons>
            <svg width="40" height="40"><path d="M33 20H8.500M20.500 8L8.500 20L20.500 32" fill="none" stroke="#5f6368" strokeWidth="3" /></svg>
            <svg width="40" height="40"><path d="M7 20H31.500M19.500 8L31.500 20L19.500 32" fill="none" stroke="#bcbec1" strokeWidth="3" /></svg>
            <svg width="40" height="40">
              <path d="M31 24A11.500 11.500 0 1 1 28.500 12.200" fill="none" stroke="#5f6368" strokeWidth="3" />
              <path d="M34 7V18H23Z" fill="#5f6368" />
            </svg>
          </NavButtons>
          <Omnibox>
            <svg width="17" height="24"><path d="M4 10V6.500A4.500 4.500 0 0 1 13 6.500V10" fill="none" stroke="#5f6368" strokeWidth="2" /><rect x="0.5" y="9" width="16" height="14" rx="2" fill="#5f6368" /></svg>
            <Url>flag-storage-3.web.app<UrlPath>/register</UrlPath></Url>
            <MdStarBorder size={35} color="#5f6368" />
          </Omnibox>
          <Extensions>
            <Slot $w={64}>
              <svg width="32" height="32">
                <circle cx="16" cy="16" r="16" fill="#28c39b" />
                <path d="M21.500 9.200A8.700 8.700 0 1 0 23.800 18H18M23.800 17V24.500" fill="none" stroke="#fff" strokeWidth="2.2" />
              </svg>
            </Slot>
            <Slot $w={64}>
              <svg width="32" height="32">
                <path d="M13 6H30Q32 6 32 8V30Q32 32 30 32H18Z" fill="#e2e2e2" />
                <path d="M16 26L23 26L18 32Z" fill="#3352b5" />
                <path d="M2 0H15L23.500 26H2Q0 26 0 24V2Q0 0 2 0Z" fill="#4d8df6" />
                <text x="3.5" y="17.5" fontFamily="Inter" fontWeight="700" fontSize="13" fill="#fff">G</text>
                <path d="M20 16H29M24.500 13V16M27.500 16Q26 21 21 24.500M21.500 18Q24 23 28.500 25" fill="none" stroke="#5e8393" strokeWidth="1.5" />
              </svg>
            </Slot>
            <Slot $w={64}>
              <svg width="32" height="32">
                <path d={gearPath(15, 15, 11, 14, 10)} fill="#fafafa" stroke="#bdbdbd" strokeWidth="1.3" strokeDasharray="3 1" />
                <circle cx="6" cy="6" r="6" fill="#46a83e" /><rect x="3.5" y="3.5" width="5" height="5" rx="1" fill="none" stroke="#c7ecc3" strokeWidth="1.4" />
                <text x="16" y="27" fontFamily="Inter" fontWeight="600" fontSize="19" fill="#4c4c4c" textLength="16" lengthAdjust="spacingAndGlyphs">js</text>
              </svg>
            </Slot>
            <Slot $w={63}>
              <svg width="27" height="32">
                <circle cx="13.5" cy="13.5" r="12.4" fill="#c6c2bd" stroke="#161616" strokeWidth="2" />
                <path d="M6 7L14 5L22 8L22 17L16 21L8 20L5 15Z" fill="#f7953b" />
                <path d="M9 10l3 1M16 9l3 1M8 15l3-1M15 17l4-1" stroke="#a35616" strokeWidth="1.5" />
                <path d="M4.500 5L22.500 22.500" stroke="#161616" strokeWidth="2.2" />
              </svg>
            </Slot>
            <Slot $w={58}><MdExtension size={34} /></Slot>
            <Slot $w={83}><MdAccountCircle size={46} /></Slot>
            <svg width="8" height="28"><circle cx="4" cy="4" r="3.2" fill="#5f6368" /><circle cx="4" cy="14" r="3.2" fill="#5f6368" /><circle cx="4" cy="24" r="3.2" fill="#5f6368" /></svg>
          </Extensions>
        </Toolbar>

        <Page>
          <Card>
            <Avatar><MdOutlineLock size={48} /></Avatar>
            <Title>Register Account</Title>
            <Field $focused>
              <Label $focused>Name&thinsp;<Asterisk>*</Asterisk></Label>
              <Caret />
            </Field>
            {fields.map((f) => (
              <Field key={f}><Label>{f}&thinsp;<Asterisk>*</Asterisk></Label></Field>
            ))}
            <ButtonGroup>
              <Button type="button" $bg="#4154b3">REGISTER</Button>
            </ButtonGroup>
            <Button type="button" $bg="#f4115a">GO BACK TO LOGIN</Button>
          </Card>
        </Page>
      </Window>

      <Bottom>
        <Rocks width="90" height="136">
          <defs><filter id="soft"><feGaussianBlur stdDeviation="1.5" /></filter><clipPath id="edge"><rect width="90" height="136" /></clipPath></defs>
          <rect width="90" height="136" fill="#0c0a0a" />
          <g clipPath="url(#edge)"><g filter="url(#soft)">
            <path d="M0 8Q22 10 32 28Q42 44 34 50Q18 56 0 56Z" fill="#181312" />
            <path d="M0 60Q20 52 48 56Q66 58 74 84Q72 98 56 94Q20 82 0 84Z" fill="#261d1c" />
            <path d="M0 88Q32 82 50 96Q52 116 46 136H0Z" fill="#261c1b" />
            <path d="M52 100Q74 98 90 116V136H50Z" fill="#1e1615" />
          </g></g>
        </Rocks>
        <Dock>
          {dockApps.map((Icon, i) => <Icon key={i} />)}
          <Separator />
          <Downloads />
          <Trash />
        </Dock>
        <Rocks width="90" height="136">
          <rect width="90" height="136" fill="#33435a" />
          <g clipPath="url(#edge)"><g filter="url(#soft)">
            <path d="M0 -4H94V16L74 22L60 12L40 30L20 20L0 10Z" fill="#10121b" />
            <path d="M40 30L62 14L94 24V140H26L36 104L48 84L40 66L56 48Z" fill="#161721" />
            <path d="M60 54l8-10 12 4-6 14zM50 96l10-14 6 10-10 16zM72 84l14-8 4 16-12 14zM64 116l10-6 6 12-14 6zM76 26l8 4-6 10z" fill="#414256" />
            <path d="M12 74l6-4 2 12-5 10zM6 40l10-4-4 10zM16 112l6-2-2 8zM22 52l10 4-6 4z" fill="#171a26" />
          </g></g>
        </Rocks>
      </Bottom>
    </Desktop>
  </>
);

export default App;
